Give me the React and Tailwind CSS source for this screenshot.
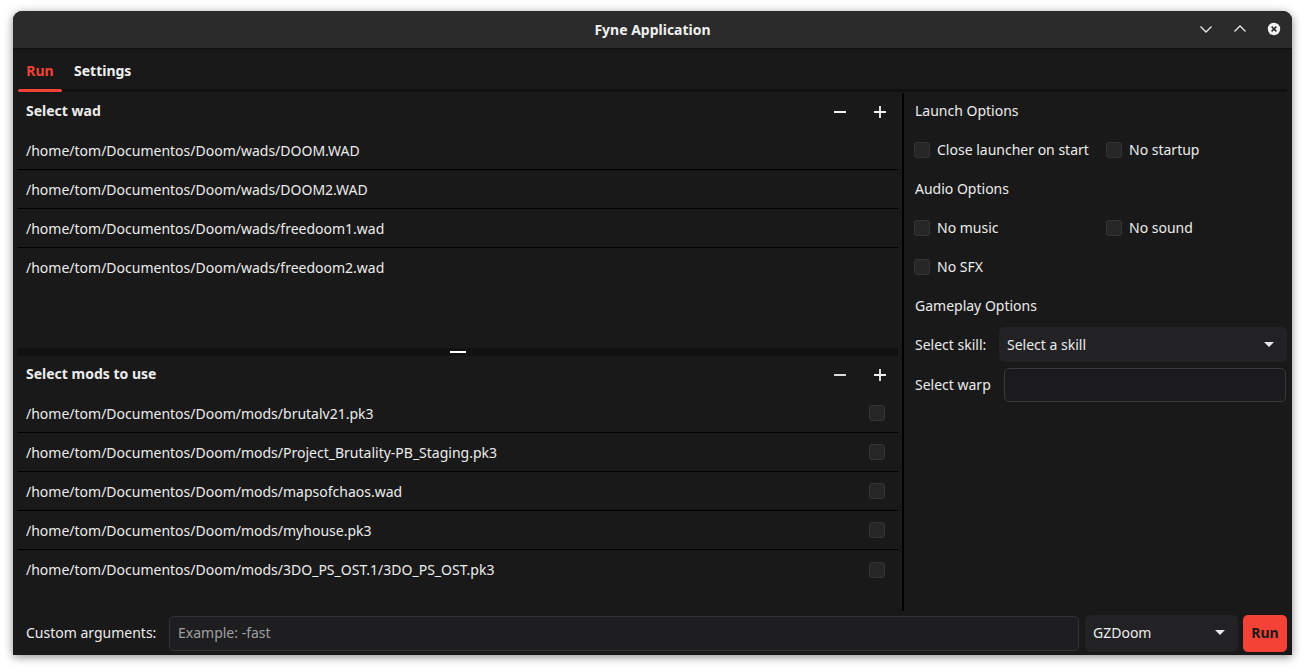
import React from "react";

const wads = [
  "/home/tom/Documentos/Doom/wads/DOOM.WAD",
  "/home/tom/Documentos/Doom/wads/DOOM2.WAD",
  "/home/tom/Documentos/Doom/wads/freedoom1.wad",
  "/home/tom/Documentos/Doom/wads/freedoom2.wad",
];
const mods = [
  "/home/tom/Documentos/Doom/mods/brutalv21.pk3",
  "/home/tom/Documentos/Doom/mods/Project_Brutality-PB_Staging.pk3",
  "/home/tom/Documentos/Doom/mods/mapsofchaos.wad",
  "/home/tom/Documentos/Doom/mods/myhouse.pk3",
  "/home/tom/Documentos/Doom/mods/3DO_PS_OST.1/3DO_PS_OST.pk3",
];

function Box() {
  return <div className="w-[16px] h-[16px] rounded-[3px] bg-[#262626] border border-[#353535] shrink-0" />;
}

function Minus() {
  return (
    <svg width="14" height="14" viewBox="0 0 14 14">
      <path d="M1 7h12" stroke="#f0f0f0" strokeWidth="1.8" />
    </svg>
  );
}
function Plus() {
  return (
    <svg width="14" height="14" viewBox="0 0 14 14">
      <path d="M1 7h12M7 1v12" stroke="#f0f0f0" strokeWidth="1.8" />
    </svg>
  );
}
function Caret() {
  return (
    <svg width="10" height="6" viewBox="0 0 10 6">
      <path d="M0 0h10L5 5z" fill="#e8e8e8" />
    </svg>
  );
}

function ListHeader({ title, lift }) {
  return (
    <div className="h-[38px] flex items-center pl-2 pr-0">
      <span className={"font-bold flex-1 " + lift}>{title}</span>
      <div className="flex gap-[4px]">
        <div className="w-[36px] h-[30px] flex items-center justify-center"><Minus /></div>
        <div className="w-[36px] h-[30px] flex items-center justify-center"><Plus /></div>
      </div>
    </div>
  );
}

function Row({ text, last, check }) {
  return (
    <div className={"h-[39px] flex items-center pl-2 pr-[13px] " + (last ? "" : "border-b border-black")}>
      <span className="flex-1">{text}</span>
      {check && <Box />}
    </div>
  );
}

function CheckItem({ label }) {
  return (
    <div className="flex items-center gap-[7px]">
      <Box />
      <span>{label}</span>
    </div>
  );
}

export default function App() {
  return (
    <div
      className="w-[1305px] h-[672px] bg-white pl-[13px] pt-[11px] overflow-hidden text-[14px] text-[#ececec]"
      style={{ fontFamily: '"Noto Sans", "Open Sans", sans-serif' }}
    >
      <div className="w-[1279px] h-[644px] bg-[#191919] rounded-t-[9px] shadow-[0_2px_10px_rgba(0,0,0,0.45)] flex flex-col overflow-hidden">
        {/* Title bar */}
        <div className="h-[38px] bg-[#2b2b2b] border-b border-[#101010] flex items-center relative shrink-0">
          <div className="flex-1 text-center font-bold text-[14px] text-[#f0f0f0] pb-[1px]">Fyne Application</div>
          <div className="absolute right-[11px] top-0 h-full flex items-center gap-[20px] pb-[1px]">
            <svg width="14" height="14" viewBox="0 0 14 14">
              <path d="M1.5 4.5L7 10l5.5-5.5" stroke="#e8e8e8" strokeWidth="1.3" fill="none" />
            </svg>
            <svg width="14" height="14" viewBox="0 0 14 14">
              <path d="M1.5 9.5L7 4l5.5 5.5" stroke="#e8e8e8" strokeWidth="1.3" fill="none" />
            </svg>
            <svg width="14" height="14" viewBox="0 0 14 14">
              <circle cx="7" cy="7" r="6.2" fill="#f2f2f2" />
              <path d="M4.6 4.6l4.8 4.8M9.4 4.6l-4.8 4.8" stroke="#2b2b2b" strokeWidth="1.5" />
            </svg>
          </div>
        </div>

        {/* Body */}
        <div className="flex-1 flex flex-col px-[5px]">
          {/* Tabs */}
          <div className="h-[40px] flex pt-[12px] shrink-0">
            <div className="w-[44px] text-center font-bold text-[#f44336] leading-[20px]">Run</div>
            <div className="pl-[12px] font-bold leading-[20px] text-[#f0f0f0]">Settings</div>
          </div>
          <div className="h-[3px] bg-[#111111] shrink-0 flex">
            <div className="w-[44px] h-[3px] rounded-full bg-[#f44336]" />
          </div>

          {/* Main content */}
          <div className="h-[520px] flex mt-[1px] shrink-0">
            {/* Left split */}
            <div className="w-[880px] flex flex-col">
              <div className="h-[255px]">
                <ListHeader title="Select wad" lift="pb-[4px]" />
                {wads.map((w, i) => (
                  <Row key={w} text={w} last={i === wads.length - 1} />
                ))}
              </div>
              <div className="h-[8px] bg-[#111111] flex items-center justify-center">
                <div className="w-[16px] h-[2px] bg-white" />
              </div>
              <div className="flex-1">
                <ListHeader title="Select mods to use" lift="pb-[4px]" />
                {mods.map((m, i) => (
                  <Row key={m} text={m} last={i === mods.length - 1} check />
                ))}
              </div>
            </div>

            {/* Divider */}
            <div className="w-[9px] flex pl-[4px] pb-[1px]">
              <div className="w-[2px] h-[518px] bg-black" />
            </div>

            {/* Right panel */}
            <div className="w-[380px] flex flex-col mt-[-1px]">
              <div className="h-[38px] flex items-center pl-2 pb-[2px]">Launch Options</div>
              <div className="h-[39px] grid grid-cols-[192px_1fr] items-center pl-[7px]">
                <CheckItem label="Close launcher on start" />
                <CheckItem label="No startup" />
              </div>
              <div className="h-[39px] flex items-center pl-2">Audio Options</div>
              <div className="h-[39px] grid grid-cols-[192px_1fr] items-center pl-[7px]">
                <CheckItem label="No music" />
                <CheckItem label="No sound" />
              </div>
              <div className="h-[39px] grid grid-cols-[192px_1fr] items-center pl-[7px]">
                <CheckItem label="No SFX" />
              </div>
              <div className="h-[39px] flex items-center pl-2">Gameplay Options</div>
              <div className="h-[39px] flex items-center pl-2">
                <span className="w-[84px]">Select skill:</span>
                <div className="flex-1 h-[35px] bg-[#222225] rounded-[5px] flex items-center pl-2 pr-[13px]">
                  <span className="flex-1">Select a skill</span>
                  <Caret />
                </div>
              </div>
              <div className="h-[41px] flex items-center pl-2 pr-[1px]">
                <span className="w-[89px]">Select warp</span>
                <div className="flex-1 h-[34px] bg-[#1b1b1d] border border-[#3a3a3c] rounded-[5px]" />
              </div>
            </div>
          </div>

          {/* Bottom bar */}
          <div className="flex-1 flex items-center pb-[3px] pt-[1px]">
            <span className="pl-2 w-[151px] text-[#ececec] pb-[2px]">Custom arguments:</span>
            <div className="flex-1 h-[35px] bg-[#1e1e20] border border-[#333336] rounded-[5px] flex items-center pl-2 pb-[2px] text-[#a0a0a0]">
              Example: -fast
            </div>
            <div className="w-[153px] h-[37px] ml-[6px] bg-[#222225] rounded-[5px] flex items-center pl-2 pr-[13px]">
              <span className="flex-1 pb-[2px]">GZDoom</span>
              <Caret />
            </div>
            <div className="w-[44px] h-[37px] ml-[5px] bg-[#f44336] rounded-[5px] flex items-center justify-center font-bold text-[#1a1a1a] pb-[2px]">
              Run
            </div>
          </div>
        </div>
      </div>
    </div>
  );
}
